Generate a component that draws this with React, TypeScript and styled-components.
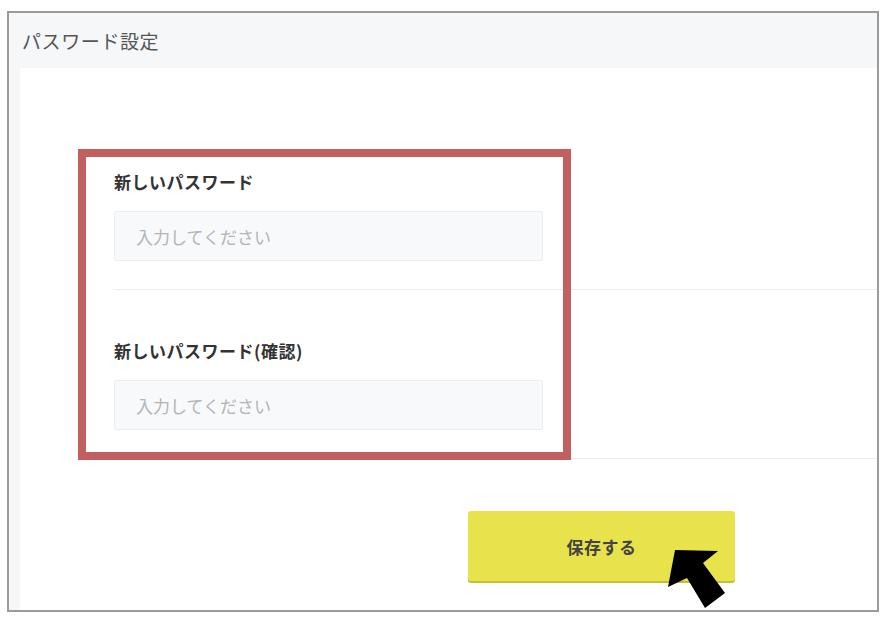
import React from "react";
import styled, { createGlobalStyle } from "styled-components";

const GlobalStyle = createGlobalStyle`
  html, body {
    margin: 0;
    padding: 0;
    background: #ffffff;
  }
  body {
    font-family: "Noto Sans CJK JP", "Noto Sans", sans-serif;
  }
  * { box-sizing: border-box; }
`;

const Frame = styled.div`
  margin: 11px 0 0 7px;
  width: 872px;
  height: 601px;
  border: 2px solid #9b9b9b;
  background: #f6f7f9;
  display: flex;
  flex-direction: column;
`;

const Header = styled.div`
  height: 55px;
  display: flex;
  align-items: center;
  padding-left: 13px;
  font-size: 19px;
  color: #555555;
  letter-spacing: 0.6px;
`;

const Body = styled.div`
  flex: 1;
  margin-left: 11px;
  background: #ffffff;
  padding-top: 53px;
  position: relative;
`;

const Section = styled.div`
  margin-left: 94px;
  padding: 49px 0 28px;
  border-bottom: 1px solid #ececef;
  display: flex;
  flex-direction: column;
`;

const Label = styled.label`
  height: 24px;
  line-height: 24px;
  font-size: 17px;
  font-weight: 700;
  color: #333333;
  letter-spacing: 0.5px;
  margin-bottom: 17px;
`;

const Input = styled.input`
  width: 429px;
  height: 50px;
  border: 1px solid #ededf0;
  border-radius: 2px;
  background: #f8f9fb;
  padding: 0 21px;
  font-family: "Noto Sans CJK JP", "Noto Sans", sans-serif;
  font-size: 17px;
  color: #333;
  outline: none;
  &::placeholder {
    color: #b4b4b4;
  }
`;

const ButtonRow = styled.div`
  padding: 52px 0 0 448px;
`;

const SaveButton = styled.button`
  width: 267px;
  height: 70px;
  border: none;
  border-radius: 3px;
  background: #e9e34b;
  box-shadow: 0 2px 0 #c6bf35;
  font-family: "Noto Sans CJK JP", "Noto Sans", sans-serif;
  font-size: 17px;
  font-weight: 700;
  color: #444444;
  letter-spacing: 0.5px;
  cursor: pointer;
`;

const Highlight = styled.div`
  position: absolute;
  left: 58px;
  top: 81px;
  width: 493px;
  height: 311px;
  border: 8px solid #c25f5f;
  pointer-events: none;
`;

const Pointer = styled.svg`
  position: absolute;
  left: 640px;
  top: 477px;
  width: 75px;
  height: 70px;
  pointer-events: none;
`;

export default function App() {
  return (
    <>
      <GlobalStyle />
      <Frame>
        <Header>パスワード設定</Header>
        <Body>
          <Section>
            <Label>新しいパスワード</Label>
            <Input type="password" placeholder="入力してください" />
          </Section>
          <Section>
            <Label>新しいパスワード(確認)</Label>
            <Input type="password" placeholder="入力してください" />
          </Section>
          <ButtonRow>
            <SaveButton>保存する</SaveButton>
          </ButtonRow>
          <Highlight />
          <Pointer viewBox="0 0 75 70">
            <polygon
              points="15,5 58,6 43,18 65,48 45,63 27,33 8,42"
              fill="#000000"
            />
          </Pointer>
        </Body>
      </Frame>
    </>
  );
}
